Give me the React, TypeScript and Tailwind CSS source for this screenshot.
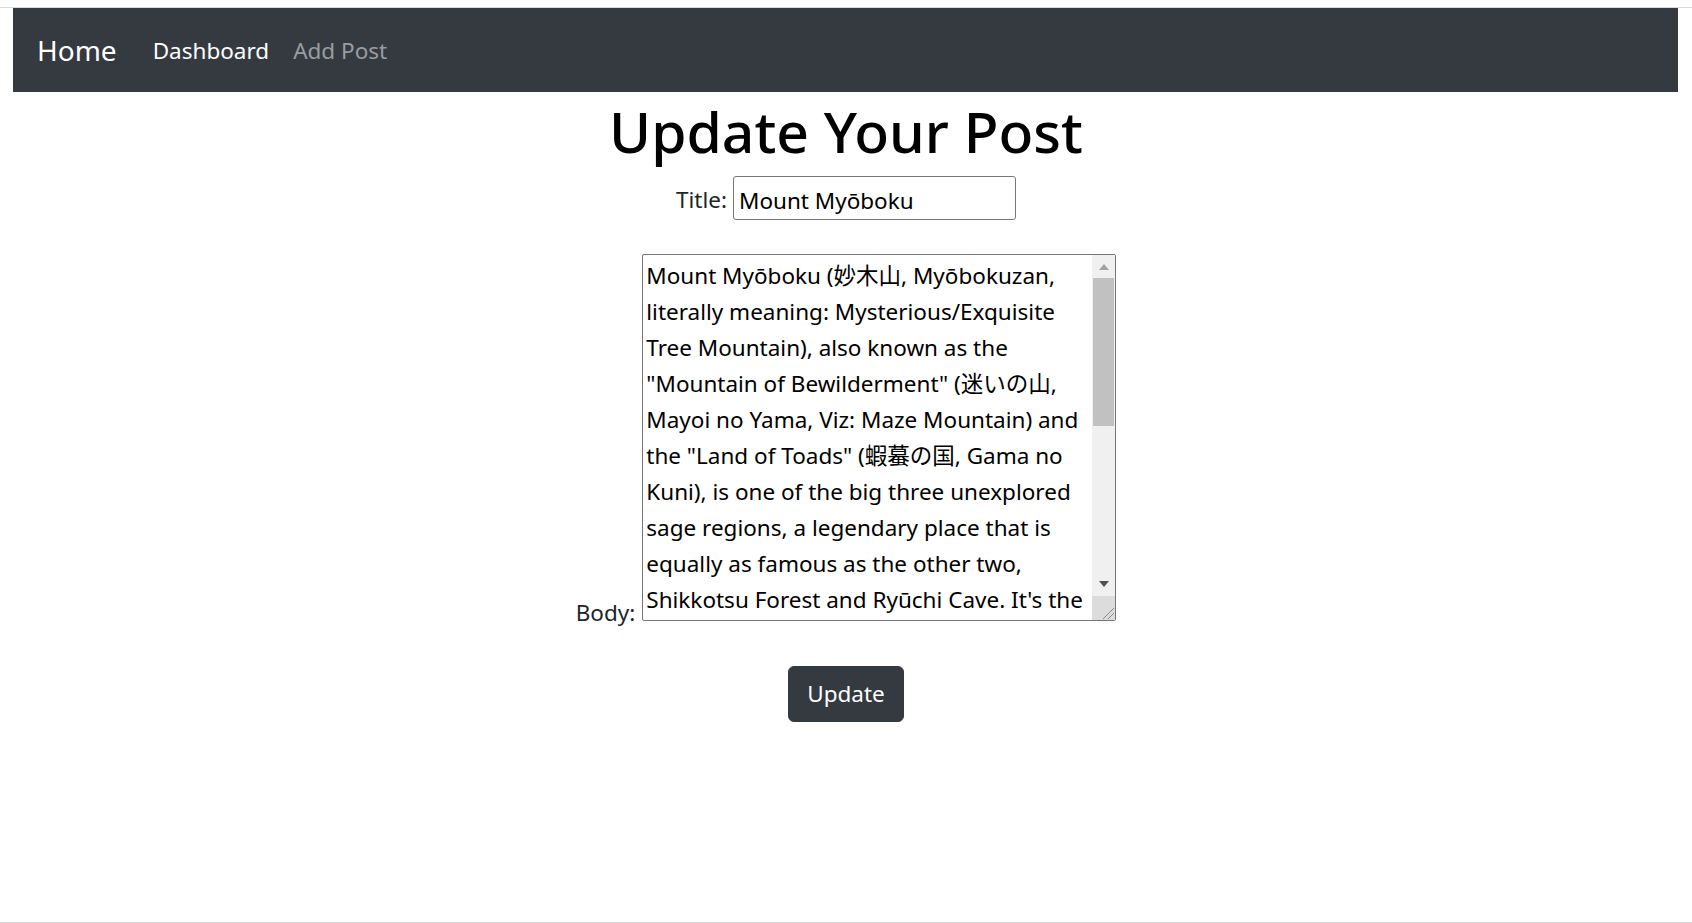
import React from 'react';

const bodyLines = [
  'Mount Myōboku (妙木山, Myōbokuzan,',
  'literally meaning: Mysterious/Exquisite',
  'Tree Mountain), also known as the',
  '"Mountain of Bewilderment" (迷いの山,',
  'Mayoi no Yama, Viz: Maze Mountain) and',
  'the "Land of Toads" (蝦蟇の国, Gama no',
  'Kuni), is one of the big three unexplored',
  'sage regions, a legendary place that is',
  'equally as famous as the other two,',
  "Shikkotsu Forest and Ryūchi Cave. It's the",
];

const App = () => {
  return (
    <div className="min-h-[923px] bg-white flex flex-col text-[#212529] font-['Noto_Sans','Noto_Sans_CJK_JP',sans-serif]">
      {/* top strip */}
      <div className="h-[8px] border-b border-[#dadada]" />

      {/* Navbar */}
      <nav className="ml-[13px] mr-[14px] h-[84px] bg-[#343a40] flex items-center px-[24px]">
        <a href="/" className="text-[28px] text-white mr-[24px] leading-[45px]">
          Home
        </a>
        <a href="/dashboard" className="text-[22.5px] text-white px-[12px] leading-[36px] pt-[2px]">
          Dashboard
        </a>
        <a href="/add" className="text-[22.5px] text-[#9a9da0] px-[12px] leading-[36px] pt-[2px]">
          Add Post
        </a>
      </nav>

      {/* Content */}
      <main className="flex flex-col items-center">
        <h1 className="text-[57px] font-medium leading-[72px] mt-[3px] mb-[9px] text-black">
          Update Your Post
        </h1>

        <div className="flex items-center gap-[6px] h-[44px]">
          <label className="text-[22.5px] leading-[36px] pt-[4px]">Title:</label>
          <input
            defaultValue="Mount Myōboku"
            className="w-[283px] h-[44px] border border-[#767676] rounded-[3px] px-[5px] pt-[4px] text-[22.5px] text-black outline-none"
          />
        </div>

        <div className="flex items-end gap-[7px] mt-[34px]">
          <label className="text-[22.5px] leading-[36px] mb-[-10px]">Body:</label>
          <div className="w-[474px] h-[367px] border border-[#767676] rounded-[2px] flex overflow-hidden">
            <div className="flex-1 pl-[3px] pt-[3px] overflow-hidden text-[22.5px] leading-[36px] text-black whitespace-nowrap">
              {bodyLines.map((line, i) => (
                <div key={i}>{line}</div>
              ))}
            </div>

            {/* scrollbar */}
            <div className="w-[23px] flex flex-col bg-[#f0f0f0]">
              <div className="h-[23px] flex items-center justify-center">
                <svg width="10" height="6" viewBox="0 0 10 6">
                  <polygon points="5,0 10,6 0,6" fill="#a3a3a3" />
                </svg>
              </div>
              <div className="flex-1 px-[1px]">
                <div className="h-[148px] bg-[#c1c1c1]" />
              </div>
              <div className="h-[25px] flex items-center justify-center">
                <svg width="10" height="6" viewBox="0 0 10 6">
                  <polygon points="0,0 10,0 5,6" fill="#505050" />
                </svg>
              </div>
              <div className="h-[24px] bg-[#dcdcdc] flex items-end justify-end">
                <svg width="14" height="14" viewBox="0 0 14 14">
                  <line x1="13" y1="2" x2="2" y2="13" stroke="#8a8a8a" strokeWidth="1" />
                  <line x1="13" y1="7" x2="7" y2="13" stroke="#8a8a8a" strokeWidth="1" />
                </svg>
              </div>
            </div>
          </div>
        </div>

        <button className="mt-[45px] bg-[#343a40] text-white text-[22.5px] leading-[36px] px-[18px] py-[9px] border border-[#343a40] rounded-[6px]">
          Update
        </button>
      </main>

      <div className="flex-1" />
      <div className="h-[1px] bg-[#d4d4d4]" />
    </div>
  );
};

export default App;
